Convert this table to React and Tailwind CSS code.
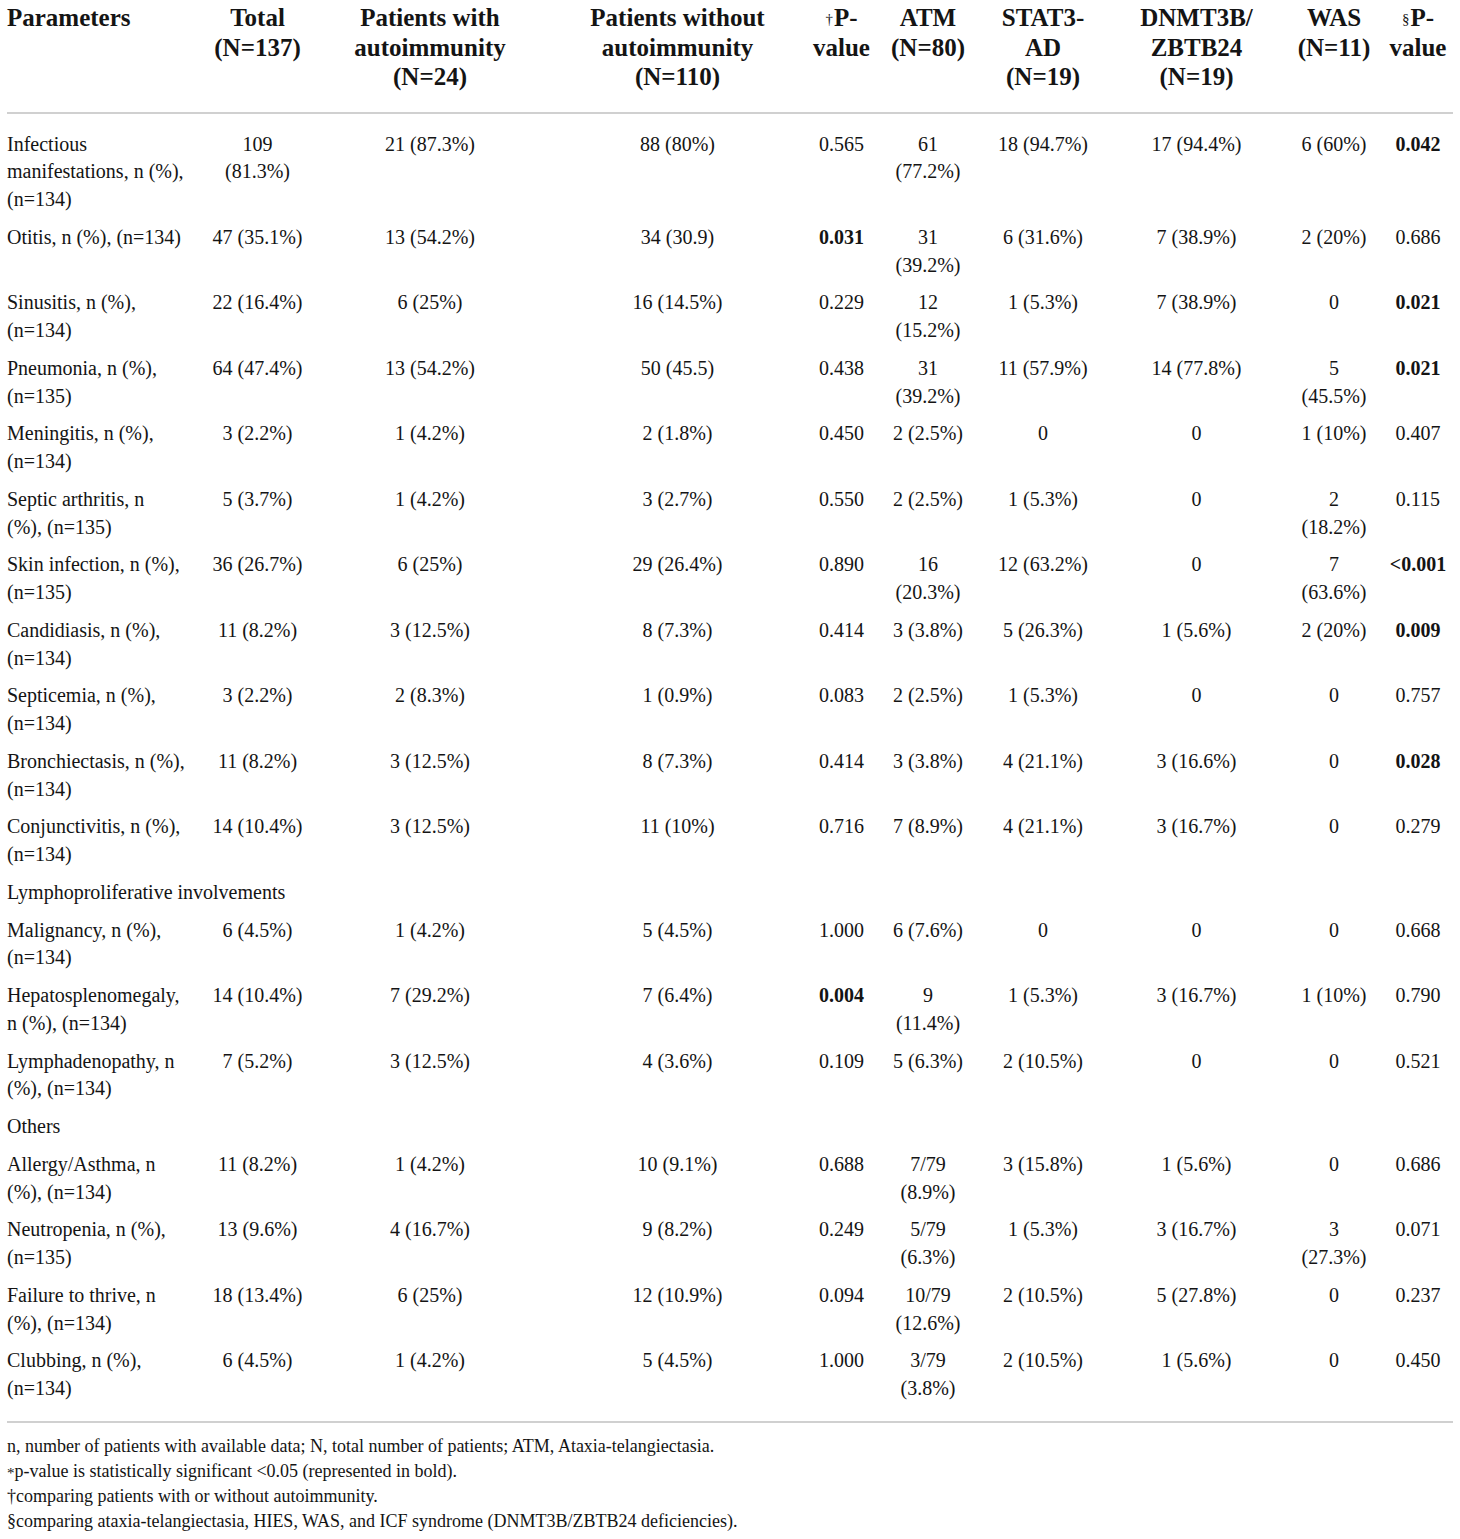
const cols = [
  { w: "w-[198px]" },
  { w: "w-[105px]" },
  { w: "w-[240px]" },
  { w: "w-[255px]" },
  { w: "w-[73px]" },
  { w: "w-[100px]" },
  { w: "w-[130px]" },
  { w: "w-[177px]" },
  { w: "w-[98px]" },
  { w: "w-[70px]" },
];

const headers = [
  ["Parameters"],
  ["Total", "(N=137)"],
  ["Patients with", "autoimmunity", "(N=24)"],
  ["Patients without", "autoimmunity", "(N=110)"],
  ["†P-", "value"],
  ["ATM", "(N=80)"],
  ["STAT3-", "AD", "(N=19)"],
  ["DNMT3B/", "ZBTB24", "(N=19)"],
  ["WAS", "(N=11)"],
  ["§P-", "value"],
];

// b = index of the bold (significant) value
const rows = [
  { p: "Infectious\nmanifestations, n (%),\n(n=134)", v: ["109\n(81.3%)", "21 (87.3%)", "88 (80%)", "0.565", "61\n(77.2%)", "18 (94.7%)", "17 (94.4%)", "6 (60%)", "0.042"], b: [8] },
  { p: "Otitis, n (%), (n=134)", v: ["47 (35.1%)", "13 (54.2%)", "34 (30.9)", "0.031", "31\n(39.2%)", "6 (31.6%)", "7 (38.9%)", "2 (20%)", "0.686"], b: [3] },
  { p: "Sinusitis, n (%),\n(n=134)", v: ["22 (16.4%)", "6 (25%)", "16 (14.5%)", "0.229", "12\n(15.2%)", "1 (5.3%)", "7 (38.9%)", "0", "0.021"], b: [8] },
  { p: "Pneumonia, n (%),\n(n=135)", v: ["64 (47.4%)", "13 (54.2%)", "50 (45.5)", "0.438", "31\n(39.2%)", "11 (57.9%)", "14 (77.8%)", "5\n(45.5%)", "0.021"], b: [8] },
  { p: "Meningitis, n (%),\n(n=134)", v: ["3 (2.2%)", "1 (4.2%)", "2 (1.8%)", "0.450", "2 (2.5%)", "0", "0", "1 (10%)", "0.407"], b: [] },
  { p: "Septic arthritis, n\n(%), (n=135)", v: ["5 (3.7%)", "1 (4.2%)", "3 (2.7%)", "0.550", "2 (2.5%)", "1 (5.3%)", "0", "2\n(18.2%)", "0.115"], b: [] },
  { p: "Skin infection, n (%),\n(n=135)", v: ["36 (26.7%)", "6 (25%)", "29 (26.4%)", "0.890", "16\n(20.3%)", "12 (63.2%)", "0", "7\n(63.6%)", "<0.001"], b: [8] },
  { p: "Candidiasis, n (%),\n(n=134)", v: ["11 (8.2%)", "3 (12.5%)", "8 (7.3%)", "0.414", "3 (3.8%)", "5 (26.3%)", "1 (5.6%)", "2 (20%)", "0.009"], b: [8] },
  { p: "Septicemia, n (%),\n(n=134)", v: ["3 (2.2%)", "2 (8.3%)", "1 (0.9%)", "0.083", "2 (2.5%)", "1 (5.3%)", "0", "0", "0.757"], b: [] },
  { p: "Bronchiectasis, n (%),\n(n=134)", v: ["11 (8.2%)", "3 (12.5%)", "8 (7.3%)", "0.414", "3 (3.8%)", "4 (21.1%)", "3 (16.6%)", "0", "0.028"], b: [8] },
  { p: "Conjunctivitis, n (%),\n(n=134)", v: ["14 (10.4%)", "3 (12.5%)", "11 (10%)", "0.716", "7 (8.9%)", "4 (21.1%)", "3 (16.7%)", "0", "0.279"], b: [] },
  { section: "Lymphoproliferative involvements" },
  { p: "Malignancy, n (%),\n(n=134)", v: ["6 (4.5%)", "1 (4.2%)", "5 (4.5%)", "1.000", "6 (7.6%)", "0", "0", "0", "0.668"], b: [] },
  { p: "Hepatosplenomegaly,\nn (%), (n=134)", v: ["14 (10.4%)", "7 (29.2%)", "7 (6.4%)", "0.004", "9\n(11.4%)", "1 (5.3%)", "3 (16.7%)", "1 (10%)", "0.790"], b: [3] },
  { p: "Lymphadenopathy, n\n(%), (n=134)", v: ["7 (5.2%)", "3 (12.5%)", "4 (3.6%)", "0.109", "5 (6.3%)", "2 (10.5%)", "0", "0", "0.521"], b: [] },
  { section: "Others" },
  { p: "Allergy/Asthma, n\n(%), (n=134)", v: ["11 (8.2%)", "1 (4.2%)", "10 (9.1%)", "0.688", "7/79\n(8.9%)", "3 (15.8%)", "1 (5.6%)", "0", "0.686"], b: [] },
  { p: "Neutropenia, n (%),\n(n=135)", v: ["13 (9.6%)", "4 (16.7%)", "9 (8.2%)", "0.249", "5/79\n(6.3%)", "1 (5.3%)", "3 (16.7%)", "3\n(27.3%)", "0.071"], b: [] },
  { p: "Failure to thrive, n\n(%), (n=134)", v: ["18 (13.4%)", "6 (25%)", "12 (10.9%)", "0.094", "10/79\n(12.6%)", "2 (10.5%)", "5 (27.8%)", "0", "0.237"], b: [] },
  { p: "Clubbing, n (%),\n(n=134)", v: ["6 (4.5%)", "1 (4.2%)", "5 (4.5%)", "1.000", "3/79\n(3.8%)", "2 (10.5%)", "1 (5.6%)", "0", "0.450"], b: [] },
];

const HeadCell = ({ lines, i }) => {
  const first = lines[0];
  const mark = first[0] === "†" || first[0] === "§" ? first[0] : null;
  return (
    <th
      className={`${i === 0 ? "text-left pl-0" : "text-center px-1"} align-top pt-[3px] pb-[20px] font-bold text-[25px] leading-[29.5px] whitespace-nowrap`}
    >
      {lines.map((l, k) => (
        <div key={k}>
          {k === 0 && mark ? (
            <>
              <sup className="text-[15px] font-normal relative -top-[2px] mr-[1px]">{mark}</sup>
              {l.slice(1)}
            </>
          ) : (
            l
          )}
        </div>
      ))}
    </th>
  );
};

export default function App() {
  return (
    <div className="min-h-screen bg-white text-[#141414] font-['Liberation_Serif','Times_New_Roman',serif]">
      <div className="px-[7px]">
        <table className="table-fixed border-collapse w-[1446px]">
          <colgroup>
            {cols.map((c, i) => (
              <col key={i} className={c.w} />
            ))}
          </colgroup>
          <thead>
            <tr className="border-b-2 border-[#d0d0d0]">
              {headers.map((h, i) => (
                <HeadCell key={i} lines={h} i={i} />
              ))}
            </tr>
          </thead>
          <tbody className="text-[20px] leading-[27.75px]">
            {rows.map((r, ri) => {
              const top = ri === 0 ? "pt-[17px]" : "pt-[5px]";
              const bottom = ri === rows.length - 1 ? "pb-[18px]" : "pb-[5px]";
              if (r.section) {
                return (
                  <tr key={ri}>
                    <td colSpan={10} className={`${top} ${bottom} text-left align-top`}>
                      {r.section}
                    </td>
                  </tr>
                );
              }
              return (
                <tr key={ri} className={ri === rows.length - 1 ? "border-b-2 border-[#d0d0d0]" : ""}>
                  <td className={`${top} ${bottom} pr-[2px] text-left align-top whitespace-pre-line`}>{r.p}</td>
                  {r.v.map((v, vi) => (
                    <td
                      key={vi}
                      className={`${top} ${bottom} px-1 text-center align-top whitespace-pre-line ${r.b.includes(vi) ? "font-bold" : ""}`}
                    >
                      {v}
                    </td>
                  ))}
                </tr>
              );
            })}
          </tbody>
        </table>
        <div className="pt-[11px] text-[18px] leading-[25px]">
          <p>n, number of patients with available data; N, total number of patients; ATM, Ataxia-telangiectasia.</p>
          <p>
            <sup className="text-[15px] relative top-[1px]">*</sup>p-value is statistically significant &lt;0.05 (represented in bold).
          </p>
          <p>†comparing patients with or without autoimmunity.</p>
          <p>§comparing ataxia-telangiectasia, HIES, WAS, and ICF syndrome (DNMT3B/ZBTB24 deficiencies).</p>
        </div>
      </div>
    </div>
  );
}
